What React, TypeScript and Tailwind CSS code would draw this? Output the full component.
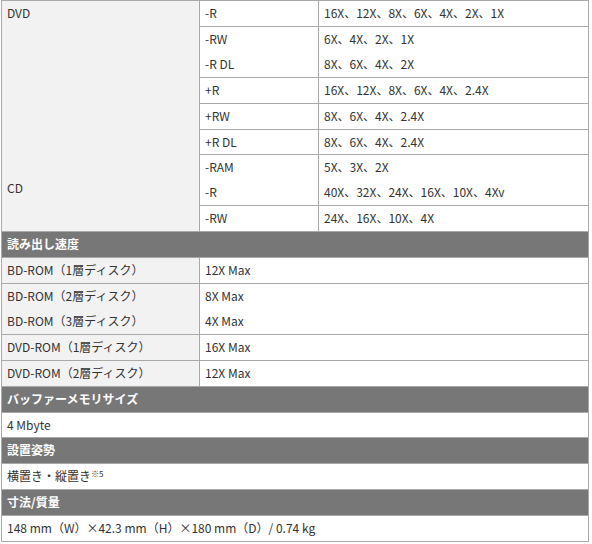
const font = { fontFamily: '"Noto Sans CJK JP", "Noto Sans", sans-serif' };

type Row = { media: string[]; speeds: string[] };

const writeRows: Row[] = [
  { media: ["-R"], speeds: ["16X、12X、8X、6X、4X、2X、1X"] },
  { media: ["-RW", "-R DL"], speeds: ["6X、4X、2X、1X", "8X、6X、4X、2X"] },
  { media: ["+R"], speeds: ["16X、12X、8X、6X、4X、2.4X"] },
  { media: ["+RW"], speeds: ["8X、6X、4X、2.4X"] },
  { media: ["+R DL"], speeds: ["8X、6X、4X、2.4X"] },
  { media: ["-RAM", "-R"], speeds: ["5X、3X、2X", "40X、32X、24X、16X、10X、4Xv"] },
  { media: ["-RW"], speeds: ["24X、16X、10X、4X"] },
];

const readRows: Row[] = [
  { media: ["BD-ROM（1層ディスク）"], speeds: ["12X Max"] },
  { media: ["BD-ROM（2層ディスク）", "BD-ROM（3層ディスク）"], speeds: ["8X Max", "4X Max"] },
  { media: ["DVD-ROM（1層ディスク）"], speeds: ["16X Max"] },
  { media: ["DVD-ROM（2層ディスク）"], speeds: ["12X Max"] },
];

const cell = "border border-[#a9a9a9] px-[5px] py-0 align-top leading-[24.9px]";

function Lines({ items }: { items: string[] }) {
  return (
    <>
      {items.map((t, i) => (
        <div key={i}>{t}</div>
      ))}
    </>
  );
}

function Heading({ children }: { children: React.ReactNode }) {
  return (
    <tr>
      <td colSpan={3} className={`${cell} bg-[#777777] font-bold text-white`}>
        {children}
      </td>
    </tr>
  );
}

function Plain({ children }: { children: React.ReactNode }) {
  return (
    <tr>
      <td colSpan={3} className={`${cell} bg-white`}>
        {children}
      </td>
    </tr>
  );
}

export default function App() {
  return (
    <div className="min-h-[544px] bg-white pl-px text-[12px] text-[#333333]" style={font}>
      <table className="w-[588px] table-fixed border-collapse">
        <colgroup>
          <col className="w-[198px]" />
          <col className="w-[119px]" />
          <col />
        </colgroup>
        <tbody>
          {writeRows.map((r, i) => (
            <tr key={i}>
              {i === 0 ? (
                <td rowSpan={writeRows.length} className={`${cell} bg-[#f2f2f2]`}>
                  <div>DVD</div>
                  <div className="h-[150px]" />
                  <div>CD</div>
                </td>
              ) : null}
              <td className={`${cell} bg-white`}>
                <Lines items={r.media} />
              </td>
              <td className={`${cell} bg-white`}>
                <Lines items={r.speeds} />
              </td>
            </tr>
          ))}
          <Heading>読み出し速度</Heading>
          {readRows.map((r, i) => (
            <tr key={i}>
              <td className={`${cell} bg-[#f2f2f2]`}>
                <Lines items={r.media} />
              </td>
              <td colSpan={2} className={`${cell} bg-white`}>
                <Lines items={r.speeds} />
              </td>
            </tr>
          ))}
          <Heading>バッファーメモリサイズ</Heading>
          <Plain>4 Mbyte</Plain>
          <Heading>設置姿勢</Heading>
          <Plain>
            横置き・縦置き<sup className="text-[8px]">※5</sup>
          </Plain>
          <Heading>寸法/質量</Heading>
          <Plain>148 mm（W）×42.3 mm（H）×180 mm（D）/ 0.74 kg</Plain>
        </tbody>
      </table>
    </div>
  );
}
